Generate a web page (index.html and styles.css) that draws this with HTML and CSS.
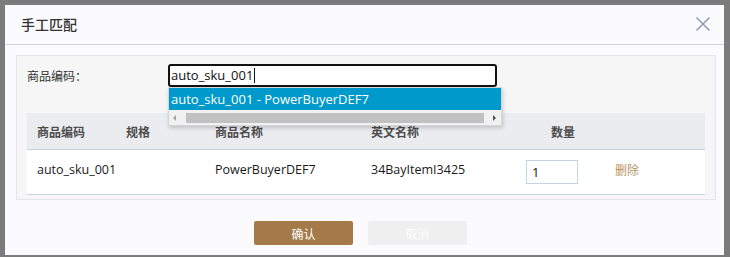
FILE: index.html
```html
<!DOCTYPE html>
<html lang="zh">
<head>
<meta charset="utf-8">
<title>手工匹配</title>
<link rel="stylesheet" href="styles.css">
</head>
<body>
<div class="dialog">
  <div class="header">
    <span class="title">手工匹配</span>
    <svg class="close" width="16" height="16" viewBox="0 0 16 16"><path d="M1.5 1.5 L14.5 14.5 M14.5 1.5 L1.5 14.5" stroke="#8e9db8" stroke-width="1.6" fill="none"/></svg>
  </div>
  <div class="body">
    <div class="panel">
      <div class="form-row">
        <label class="label">商品编码：</label>
        <div class="combo">
          <div class="input">auto_sku_001<span class="caret"></span></div>
          <div class="dropdown">
            <div class="option">auto_sku_001 - PowerBuyerDEF7</div>
            <div class="hscroll">
              <span class="arrow left"></span>
              <span class="thumb"></span>
              <span class="arrow right"></span>
            </div>
          </div>
        </div>
      </div>
      <div class="table">
        <div class="row head">
          <div class="cell">商品编码</div>
          <div class="cell">规格</div>
          <div class="cell">商品名称</div>
          <div class="cell">英文名称</div>
          <div class="cell qty-head">数量</div>
          <div class="cell"></div>
        </div>
        <div class="row data">
          <div class="cell">auto_sku_001</div>
          <div class="cell"></div>
          <div class="cell">PowerBuyerDEF7</div>
          <div class="cell">34BayItemI3425</div>
          <div class="cell qty"><div class="qty-input">1</div></div>
          <div class="cell"><span class="del">删除</span></div>
        </div>
      </div>
    </div>
  </div>
  <div class="footer">
    <button class="btn ok">确认</button>
    <button class="btn cancel">取消</button>
  </div>
</div>
</body>
</html>
```
FILE: styles.css
```css
html, body {
  margin: 0;
  padding: 0;
}
body {
  width: 730px;
  height: 257px;
  background: #7b7b7b;
  overflow: hidden;
  font-family: "Open Sans", "Noto Sans CJK SC", sans-serif;
  font-size: 12px;
  color: #222;
}
.dialog {
  margin: 5px 0 0 5px;
  width: 719px;
  height: 250px;
  background: #fbfbfd;
  display: flex;
  flex-direction: column;
}
.header {
  height: 39px;
  border-bottom: 1px solid #d3d0e3;
  display: flex;
  align-items: center;
  justify-content: space-between;
  padding: 0 13px 0 16px;
  flex-shrink: 0;
}
.title {
  font-family: "Noto Sans CJK SC", sans-serif;
  font-size: 14px;
  color: #333;
  font-weight: 500;
  margin-top: -1px;
}
.close {
  margin-top: -1px;
}
.body {
  padding: 10px 8px 0 11px;
}
.panel {
  background: #f6f6f7;
  border: 1px solid #e6e6e8;
  height: 135px;
  padding: 8px 10px 0 10px;
  box-sizing: content-box;
  width: 678px;
}
.form-row {
  display: flex;
  align-items: center;
  height: 23px;
}
.label {
  font-family: "Noto Sans CJK SC", sans-serif;
  font-size: 12px;
  color: #333;
  width: 141px;
  margin-top: -1px;
}
.combo {
  position: relative;
  width: 329px;
  height: 23px;
}
.input {
  box-sizing: border-box;
  height: 23px;
  border: 2px solid #111;
  border-radius: 3px;
  background: #fff;
  padding-left: 1px;
  font-size: 13px;
  line-height: 19px;
  color: #111;
  display: flex;
  align-items: center;
}
.caret {
  display: inline-block;
  width: 1px;
  height: 15px;
  background: #111;
  margin-left: 1px;
}
.dropdown {
  position: absolute;
  left: 0;
  top: 23px;
  width: 332px;
  background: #fff;
  border: 1px solid #d6d6d6;
  box-shadow: 1px 2px 4px rgba(0,0,0,0.18);
  z-index: 5;
}
.option {
  height: 22px;
  line-height: 22px;
  background: #0099cc;
  color: #fff;
  font-size: 13px;
  padding-left: 2px;
}
.hscroll {
  height: 15px;
  background: #f1f1f1;
  display: flex;
  align-items: center;
}
.arrow {
  width: 0;
  height: 0;
  border-top: 3px solid transparent;
  border-bottom: 3px solid transparent;
}
.arrow.left {
  border-right: 3px solid #a3a3a3;
  margin: 0 10px 0 4px;
}
.arrow.right {
  border-left: 3px solid #505050;
  margin: 0 0 0 9px;
}
.thumb {
  width: 298px;
  height: 10px;
  background: #c1c1c1;
}
.table {
  margin-top: 26px;
  width: 678px;
}
.row {
  display: grid;
  grid-template-columns: 89px 89px 156px 155px 89px 1fr;
  align-items: center;
}
.row.head {
  height: 36px;
  background: #ebecf0;
  border-bottom: 1px solid #cbd3e2;
}
.row.head .cell {
  font-family: "Noto Sans CJK SC", sans-serif;
  font-weight: 700;
  color: #4d4d4d;
  font-size: 12px;
}
.row.data {
  height: 44px;
  background: #fff;
  border-bottom: 1px solid #c9d5e6;
}
.cell {
  padding-left: 10px;
  white-space: nowrap;
}
.row.data .cell {
  font-size: 12.5px;
  color: #1a1a1a;
  margin-top: -5px;
}
.row.head .qty-head {
  padding-left: 35px;
}
.row.data .qty {
  margin-top: 0;
  padding-left: 10px;
}
.qty-input {
  box-sizing: border-box;
  width: 52px;
  height: 24px;
  border: 1px solid #c5d3e3;
  background: #fff;
  padding-left: 5px;
  font-size: 13px;
  line-height: 22px;
  color: #111;
}
.del {
  font-family: "Noto Sans CJK SC", sans-serif;
  color: #b8945f;
  font-size: 12px;
}
.footer {
  display: flex;
  gap: 15px;
  padding: 21px 0 0 249px;
}
.btn {
  width: 99px;
  height: 24px;
  border: none;
  border-radius: 2px;
  font-family: "Noto Sans CJK SC", sans-serif;
  font-size: 12px;
  color: #fff;
  padding: 0;
}
.btn.ok {
  background: #a47a49;
}
.btn.cancel {
  background: #efefef;
  color: #fdfdfd;
}
```
